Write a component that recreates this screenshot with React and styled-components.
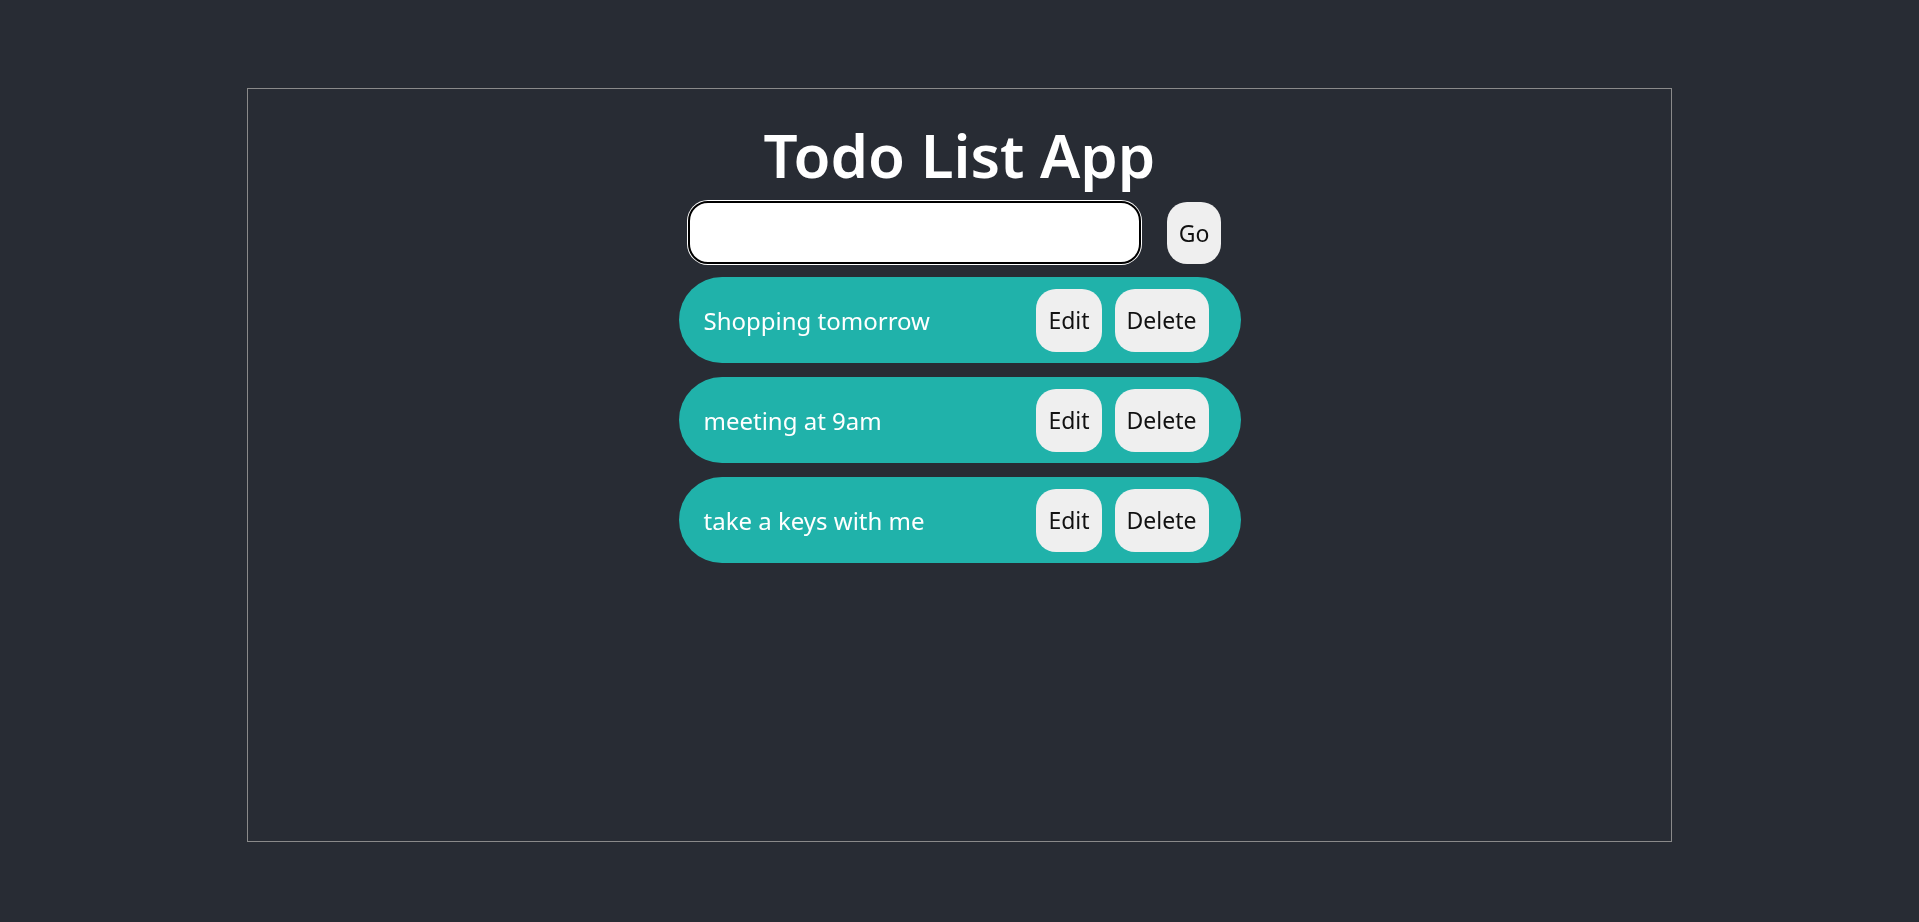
import React, {useState} from 'react';
import styled, {createGlobalStyle} from 'styled-components';

const GlobalStyle = createGlobalStyle`
  html, body {
    margin: 0;
    padding: 0;
    background: #282c34;
  }
  body {
    padding: 8px;
    min-height: 922px;
    box-sizing: border-box;
    font-family: "Noto Sans", "Open Sans", sans-serif;
  }
`

const Wrapper = styled.div`
  width: 1425px;
  height: 754px;
  margin: 80px auto 0;
  box-sizing: border-box;
  border: 1px solid #8a8a8a;
  padding-top: 26px;
  display: flex;
  flex-direction: column;
  align-items: center;
`

const Title = styled.h1`
  margin: 0;
  color: #ffffff;
  font-size: 60px;
  font-weight: 600;
  line-height: 80px;
`

const Form = styled.form`
  display: flex;
  align-items: center;
  gap: 26px;
  margin-top: 6px;
  padding-right: 10px;
`

const Input = styled.input`
  width: 453px;
  height: 63px;
  box-sizing: border-box;
  border: 2px solid #000;
  border-radius: 20px;
  box-shadow: 0 0 0 1px #fff;
  background: #fff;
  padding: 0 11px;
  font-family: inherit;
  font-size: 24px;
  caret-color: #000;
  outline: none;
`

const Button = styled.button`
  height: ${props => props.$tall ? '63px' : '62px'};
  padding: 0 12px;
  border: none;
  border-radius: 20px;
  background: #efefef;
  color: #111;
  font-family: inherit;
  font-size: 23px;
  cursor: pointer;
`

const List = styled.ul`
  list-style: none;
  margin: 13px 0 0;
  padding: 0;
  display: flex;
  flex-direction: column;
  gap: 14px;
`

const Item = styled.li`
  width: 562px;
  height: 86px;
  box-sizing: border-box;
  padding: 0 32px 0 25px;
  border-radius: 43px;
  background: #20b2aa;
  display: flex;
  align-items: center;
  justify-content: space-between;
`

const ItemText = styled.span`
  color: #fff;
  font-size: 24px;
`

const Actions = styled.div`
  display: flex;
  gap: 13px;
`

const App = () => {
    const [text, setText] = useState('')
    const [todos, setTodos] = useState([
        {id: 1, text: 'Shopping tomorrow'},
        {id: 2, text: 'meeting at 9am'},
        {id: 3, text: 'take a keys with me'},
    ])

    const addTodo = (e) => {
        e.preventDefault()
        if (!text.trim()) return
        setTodos([...todos, {id: Date.now(), text}])
        setText('')
    }

    const removeTodo = (id) => {
        setTodos(todos.filter(t => t.id !== id))
    }

    return (
        <>
            <GlobalStyle/>
            <Wrapper>
                <Title>Todo List App</Title>
                <Form onSubmit={addTodo}>
                    <Input autoFocus value={text} onChange={(e) => setText(e.target.value)}/>
                    <Button type="submit">Go</Button>
                </Form>
                <List>
                    {todos.map(todo => (
                        <Item key={todo.id}>
                            <ItemText>{todo.text}</ItemText>
                            <Actions>
                                <Button $tall type="button">Edit</Button>
                                <Button $tall type="button" onClick={() => removeTodo(todo.id)}>Delete</Button>
                            </Actions>
                        </Item>
                    ))}
                </List>
            </Wrapper>
        </>
    )
}

export default App;
